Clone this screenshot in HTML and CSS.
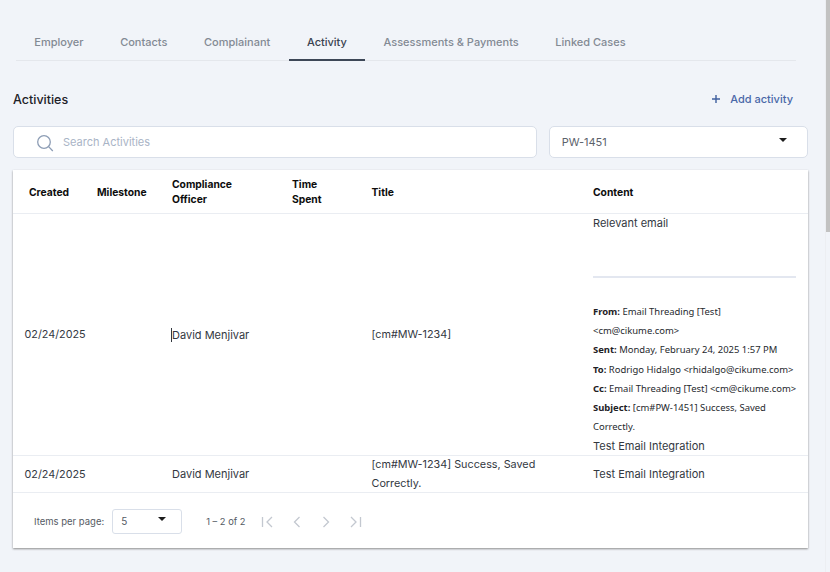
FILE: index.html
```html
<!DOCTYPE html>
<html lang="en">
<head>
<meta charset="utf-8">
<title>Activities</title>
<link rel="stylesheet" href="styles.css">
</head>
<body>
<main class="page">
  <nav class="tabs">
    <a class="tab">Employer</a>
    <a class="tab">Contacts</a>
    <a class="tab">Complainant</a>
    <a class="tab active">Activity</a>
    <a class="tab">Assessments &amp; Payments</a>
    <a class="tab">Linked Cases</a>
  </nav>
  <div class="heading">
    <h1>Activities</h1>
    <button class="add"><svg width="10" height="10" viewBox="0 0 10 10"><path d="M5 1v8M1 5h8" stroke="#3f5f9f" stroke-width="1.4" fill="none"/></svg><span>Add activity</span></button>
  </div>
  <div class="filters">
    <div class="field search">
      <svg width="18" height="18" viewBox="0 0 18 18"><circle cx="8" cy="8" r="6.3" fill="none" stroke="#8d9db5" stroke-width="1.3"/><path d="M12.6 12.6l4.2 4.4" stroke="#8d9db5" stroke-width="1.3" fill="none"/></svg>
      <span>Search Activities</span>
    </div>
    <div class="field select">
      <span>PW-1451</span><i class="caret"></i>
    </div>
  </div>
  <section class="card">
    <div class="row head">
      <div class="c1 pad single">Created</div>
      <div class="c2 single">Milestone</div>
      <div class="c3">Compliance<br>Officer</div>
      <div class="c4">Time<br>Spent</div>
      <div class="c5 single">Title</div>
      <div class="c6 single">Content</div>
    </div>
    <div class="row big">
      <div class="c1">02/24/2025</div>
      <div class="c2"></div>
      <div class="c3"><span class="cursor">David Menjivar</span></div>
      <div class="c4"></div>
      <div class="c5">[cm#MW-1234]</div>
      <div class="c6 content">
        <p class="top">Relevant email</p>
        <hr>
        <div class="mail">
          <b>From:</b> Email Threading [Test]<br>&lt;cm@cikume.com&gt;<br>
          <b>Sent:</b> Monday, February 24, 2025 1:57 PM<br>
          <b>To:</b> Rodrigo Hidalgo &lt;rhidalgo@cikume.com&gt;<br>
          <b>Cc:</b> Email Threading [Test] &lt;cm@cikume.com&gt;<br>
          <b>Subject:</b> [cm#PW-1451] Success, Saved<br>Correctly.
        </div>
        <p class="bottom">Test Email Integration</p>
      </div>
    </div>
    <div class="row small">
      <div class="c1">02/24/2025</div>
      <div class="c2"></div>
      <div class="c3">David Menjivar</div>
      <div class="c4"></div>
      <div class="c5">[cm#MW-1234] Success, Saved Correctly.</div>
      <div class="c6">Test Email Integration</div>
    </div>
    <footer class="pager">
      <span class="label">Items per page:</span>
      <div class="size"><span>5</span><i class="caret"></i></div>
      <span class="range">1 – 2 of 2</span>
      <div class="nav">
        <svg width="14" height="12" viewBox="0 0 14 12"><path d="M1.5 1v10M11 1L6 6l5 5" fill="none" stroke="#c3c8d0" stroke-width="1.3"/></svg>
        <svg width="14" height="12" viewBox="0 0 14 12"><path d="M9.5 1L4.500 6l5 5" fill="none" stroke="#c3c8d0" stroke-width="1.3"/></svg>
        <svg width="14" height="12" viewBox="0 0 14 12"><path d="M4.500 1l5 5-5 5" fill="none" stroke="#c3c8d0" stroke-width="1.3"/></svg>
        <svg width="14" height="12" viewBox="0 0 14 12"><path d="M3 1l5 5-5 5M12.500 1v10" fill="none" stroke="#c3c8d0" stroke-width="1.3"/></svg>
      </div>
    </footer>
  </section>
</main>
<div class="scrollbar"><div class="thumb"></div></div>
</body>
</html>
```
FILE: styles.css
```css
* { box-sizing: border-box; }
html, body { height: 572px; overflow: hidden; }
body {
  margin: 0;
  background: #f1f4f9;
  font-family: "Inter", "Liberation Sans", sans-serif;
  color: #33383f;
  display: flex;
}
.page { width: 821px; padding: 24px 13px 0 13px; flex: none; }
.scrollbar { flex: 1; background: #f1f4f9; border-left: 1px solid #eceef2; margin-left: 4px; }
.thumb { height: 232px; background: #c2c2c2; }

.tabs { display: flex; height: 37px; margin-left: 3px; margin-right: 12px; border-bottom: 1px solid #e4e7ec; }
.tab {
  display: flex; align-items: center; justify-content: center;
  padding: 0 18.300px 2px;
  height: 37px;
  font-size: 11px; font-weight: 500; color: #838a94;
  white-space: nowrap;
}
.tab.active { color: #3a4350; border-bottom: 2px solid #3d4757; padding-bottom: 0; }

.heading { display: flex; justify-content: space-between; align-items: center; height: 28px; margin-top: 24px; }
h1 { margin: 0; font-size: 12.500px; font-weight: 500; color: #1d2128; }
.add {
  display: flex; align-items: center; gap: 9px;
  border: 0; background: none; padding: 0; margin: 0 15px 0 0;
  font: 500 11px "Inter", "Liberation Sans", sans-serif; color: #4a68a8;
}

.filters { display: flex; gap: 12px; margin-top: 13px; }
.field {
  display: flex; align-items: center; height: 32px;
  background: #fff; border: 1px solid #d9dfe9; border-radius: 5px;
  font-size: 11px;
}
.search { width: 525px; padding-left: 22px; gap: 9px; color: #a9b4c6; }
.search svg { margin-top: 2px; }
.select { width: 260px; padding: 0 20px 0 12px; justify-content: space-between; color: #5c626b; }
.caret {
  display: block; width: 0; height: 0;
  border-left: 4px solid transparent; border-right: 4px solid transparent;
  border-top: 4px solid #1c1c1c;
  margin-top: -4px;
}

.card { margin-top: 12px; width: 795px; background: #fff; box-shadow: 0 1px 2px #8b8b8b; }
.row { display: flex; align-items: center; font-size: 11px; border-bottom: 1px solid #eaedf2; }
.row > div { flex: none; }
.c1 { width: 84px; padding-left: 11.500px; font-size: 10.800px; }
.c1.pad { padding-left: 16px; }
.c2 { width: 75px; }
.c3 { width: 120px; }
.c4 { width: 79.500px; }
.c5 { width: 221.500px; padding-right: 10px; font-size: 10.800px; }
.c6 { width: 215px; padding-right: 12px; }

.head { height: 44px; font-weight: 700; color: #0d0d0d; line-height: 15px; }
.head > div { font-size: 10.300px; }
.head .single { padding-top: 2px; }
.big { height: 242px; color: #33383f; }
.small { height: 37px; line-height: 19px; color: #33383f; }

.content { height: 241px; overflow: hidden; color: #33383f; }
.content p { margin: 0; line-height: 16px; }
.top { padding-top: 1px; }
.content hr { border: 0; border-top: 2px solid #e3e7f0; margin: 45px 0 0; }
.mail {
  margin-top: 24px;
  font-family: "Noto Sans", "Open Sans", sans-serif;
  font-size: 9.450px; line-height: 19.200px; color: #26292e; white-space: nowrap;
}
.mail b { font-weight: 700; color: #1e2125; }
.content .bottom { margin-top: 2px; }
.cursor { border-left: 1px solid #33383f; margin-left: -1px; }

.pager { display: flex; align-items: center; height: 55px; padding-top: 2px; font-size: 9.500px; color: #555b64; }
.label { margin-left: 21px; }
.size {
  display: flex; align-items: center; justify-content: space-between;
  width: 70px; height: 25px; margin-left: 8px; margin-top: -1px;
  padding: 0 15px 0 8px;
  border: 1px solid #d9dfe9; border-radius: 3px;
  font-size: 10px;
}
.range { margin-left: 24px; font-size: 9.300px; }
.nav { display: flex; gap: 15px; margin-left: 16px; }
```
